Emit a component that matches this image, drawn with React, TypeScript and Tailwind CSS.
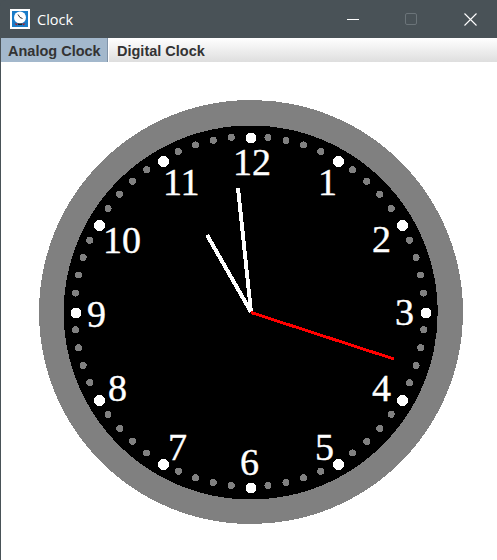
const NUMBERS: Array<{ label: string; x: number; y: number }> = [
	{ label: "12", x: 233, y: 175 },
	{ label: "1", x: 318, y: 195 },
	{ label: "2", x: 372, y: 252 },
	{ label: "3", x: 395, y: 325 },
	{ label: "4", x: 372, y: 401 },
	{ label: "5", x: 315, y: 460 },
	{ label: "6", x: 240, y: 475 },
	{ label: "7", x: 168, y: 460 },
	{ label: "8", x: 108, y: 401 },
	{ label: "9", x: 87, y: 327 },
	{ label: "10", x: 103, y: 253 },
	{ label: "11", x: 163, y: 195 },
];

const TICKS = Array.from({ length: 60 }, (_, i) => i);

function AppIcon() {
	return (
		<svg width="20" height="20" viewBox="0 0 20 20" className="ml-[10px]">
			<rect width="20" height="20" fill="#ffffff" />
			<rect x="2" y="2" width="16" height="16" fill="#1a7cc8" />
			<circle cx="10" cy="8.5" r="6" fill="#ffffff" />
			<path d="M10 8.5 L8 5.5 M10 8.5 L12.5 9.5" stroke="#333333" strokeWidth="1" />
			<path d="M4.5 14.5 L8 14.5 L6.5 16.5 Z M15.5 14.5 L12 14.5 L13.5 16.5 Z" fill="#b02020" />
			<rect x="8" y="14.5" width="4" height="1.5" fill="#222222" />
		</svg>
	);
}

function TitleBar() {
	return (
		<div className="flex h-[38px] shrink-0 items-center bg-[#495257] rounded-tl-md">
			<AppIcon />
			<span className="ml-[7px] pt-px font-['Open_Sans',sans-serif] text-[14.5px] text-white">Clock</span>
			<div className="ml-auto flex items-center">
				<svg width="12" height="12" viewBox="0 0 12 12" className="mr-[46px]">
					<path d="M0 6.5 H12" stroke="#ffffff" strokeWidth="1" />
				</svg>
				<svg width="12" height="12" viewBox="0 0 12 12" className="mr-[47px]">
					<rect x="0.5" y="0.5" width="11" height="11" rx="1.5" fill="none" stroke="#6b7479" strokeWidth="1" />
				</svg>
				<svg width="13" height="13" viewBox="0 0 13 13" className="mr-[20px]">
					<path d="M0.5 0.5 L12.5 12.5 M12.5 0.5 L0.5 12.5" stroke="#ffffff" strokeWidth="1.1" />
				</svg>
			</div>
		</div>
	);
}

function TabBar() {
	return (
		<div className="flex h-[24px] shrink-0 bg-gradient-to-b from-[#ffffff] to-[#dedede] font-['Liberation_Sans',sans-serif] text-[14.5px] font-bold text-[#333333]">
			<div className="flex w-[107px] items-center border-r border-[#8093a8] bg-[#a3b8cc] pl-[7px] pt-[3px]">Analog Clock</div>
			<div className="flex items-center border-l border-white pl-[8px] pt-[3px]">Digital Clock</div>
		</div>
	);
}

function ClockFace() {
	return (
		<svg width="496" height="498" viewBox="1 62 496 498" className="block" shapeRendering="crispEdges">
			<circle cx="251" cy="312" r="212" fill="#808080" />
			<circle cx="250.7" cy="312.5" r="187" fill="#000000" />
			{TICKS.map((i) => {
				const a = (i * Math.PI) / 30;
				if (i % 5 === 0) {
					return <circle key={i} cx={251 + 175 * Math.sin(a)} cy={313 - 175 * Math.cos(a)} r="5.5" fill="#ffffff" />;
				}
				return <circle key={i} cx={249.6 + 175 * Math.sin(a)} cy={311.4 - 175 * Math.cos(a)} r="3.5" fill="#808080" />;
			})}
			{NUMBERS.map((n) => (
				<text key={n.label} x={n.x} y={n.y} fill="#ffffff" stroke="#ffffff" strokeWidth="0.4" fontFamily="'Liberation Serif', serif" fontSize="38">
					{n.label}
				</text>
			))}
			<line x1="251" y1="312" x2="207" y2="235" stroke="#ffffff" strokeWidth="3.9" />
			<line x1="251" y1="312" x2="238" y2="188" stroke="#ffffff" strokeWidth="3.9" />
			<line x1="251" y1="312.5" x2="394" y2="359" stroke="#ff0000" strokeWidth="2.9" />
		</svg>
	);
}

export default function App() {
	return (
		<div className="flex h-[560px] w-[497px] flex-col overflow-hidden bg-[#495257]">
			<TitleBar />
			<div className="ml-px flex flex-1 flex-col bg-white">
				<TabBar />
				<ClockFace />
			</div>
		</div>
	);
}
